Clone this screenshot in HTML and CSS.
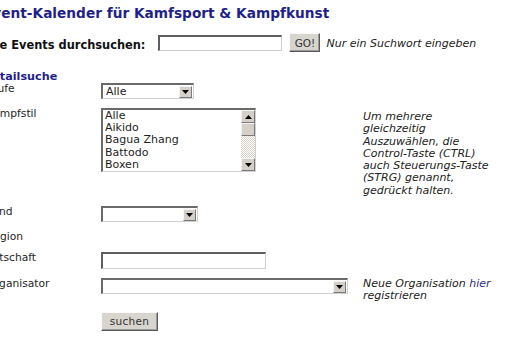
FILE: index.html
```html
<!DOCTYPE html>
<html lang="de">
<head>
<meta charset="utf-8">
<title>Event-Kalender</title>
<link rel="stylesheet" href="styles.css">
</head>
<body>
<div class="page">
  <h1 class="title">Event-Kalender für Kamfsport &amp; Kampfkunst</h1>
  <form class="search">
    <label class="search-label">Alle Events durchsuchen:</label>
    <input class="text search-input" type="text">
    <button class="btn btn-go" type="button">GO!</button>
    <span class="hint">Nur ein Suchwort eingeben</span>
  </form>
  <h2 class="subtitle">Detailsuche</h2>
  <div class="form">
    <div class="label">Stufe</div>
    <div class="control">
      <div class="select select-typ"><span class="select-value">Alle</span><span class="select-arrow"><svg width="7" height="4" viewBox="0 0 7 4"><path d="M0 0H7L3.5 4Z" fill="#000"/></svg></span></div>
    </div>
    <div></div>

    <div class="label">Kampfstil</div>
    <div class="control">
      <div class="listbox">
        <ul class="options">
          <li>Alle</li>
          <li>Aikido</li>
          <li>Bagua Zhang</li>
          <li>Battodo</li>
          <li>Boxen</li>
        </ul>
        <div class="scrollbar">
          <span class="sb-btn"><svg width="7" height="4" viewBox="0 0 7 4"><path d="M0 4H7L3.5 0Z" fill="#000"/></svg></span>
          <span class="sb-thumb"></span>
          <span class="sb-track"></span>
          <span class="sb-btn"><svg width="7" height="4" viewBox="0 0 7 4"><path d="M0 0H7L3.5 4Z" fill="#000"/></svg></span>
        </div>
      </div>
    </div>
    <div class="help help-top">Um mehrere gleichzeitig Auszuwählen, die Control-Taste (CTRL) auch Steuerungs-Taste (STRG) genannt, gedrückt halten.</div>

    <div class="label">Land</div>
    <div class="control">
      <div class="select select-land"><span class="select-value"></span><span class="select-arrow"><svg width="7" height="4" viewBox="0 0 7 4"><path d="M0 0H7L3.5 4Z" fill="#000"/></svg></span></div>
    </div>
    <div></div>

    <div class="label">Region</div>
    <div class="control"></div>
    <div></div>

    <div class="label">Ortschaft</div>
    <div class="control"><input class="text ort-input" type="text"></div>
    <div></div>

    <div class="label">Organisator</div>
    <div class="control">
      <div class="select select-org"><span class="select-value"></span><span class="select-arrow"><svg width="7" height="4" viewBox="0 0 7 4"><path d="M0 0H7L3.5 4Z" fill="#000"/></svg></span></div>
    </div>
    <div class="help">Neue Organisation <a class="link" href="#">hier</a> registrieren</div>

    <div></div>
    <div class="control"><button class="btn btn-submit" type="button">suchen</button></div>
    <div></div>
  </div>
</div>
</body>
</html>
```

FILE: styles.css
```css
* { box-sizing: border-box; }
html, body { margin: 0; padding: 0; background: #fff; }
body {
  font-family: "DejaVu Sans", Verdana, sans-serif;
  color: #1e1e1e;
  overflow: hidden;
}
.page { margin-left: -17px; }

.title {
  font-size: 13.7px;
  font-weight: bold;
  color: #1f1f8c;
  margin: 5px 0 0;
  line-height: 16px;
  white-space: nowrap;
}

/* generic controls */
.text {
  display: block;
  background: #fff;
  border-style: solid;
  border-width: 2px 1px 1px 2px;
  border-color: #5e5e5e #cfcfcf #cfcfcf #5e5e5e;
  padding: 0;
  margin: 0;
}
.btn {
  display: block;
  background: #d8d5ce;
  border: 1px solid;
  border-color: #fafafa #5a5a5a #5a5a5a #fafafa;
  box-shadow: inset -1px -1px 0 #9a9a9a;
  font-family: "DejaVu Sans", Verdana, sans-serif;
  font-size: 10.5px;
  color: #333;
  padding: 0;
  margin: 0;
}

.search {
  display: flex;
  align-items: center;
  height: 19px;
  margin: 12px 0 0;
}
.search-label {
  font-size: 11.4px;
  font-weight: bold;
  color: #111;
  white-space: nowrap;
  margin-top: 4px;
}
.search .search-input { width: 124px; height: 16px; margin-left: 13px; }
.search .btn-go { width: 31px; height: 19px; margin-left: 7px; }
.hint { margin-left: 6px; font-size: 11px; font-style: italic; color: #222; white-space: nowrap; margin-top: 1px; }

.subtitle {
  font-size: 11.2px;
  font-weight: bold;
  color: #1f1f8c;
  margin: 19px 0 0;
  line-height: 12px;
}

.form {
  display: grid;
  grid-template-columns: 118px 262px 134px;
  row-gap: 9px;
  align-items: start;
}
.label {
  padding-left: 3.5px;
  font-size: 10.7px;
  line-height: 12px;
  color: #1e1e1e;
  white-space: nowrap;
}

.ort-input { width: 165px; height: 17px; }

.select {
  display: flex;
  align-items: center;
  height: 16px;
  background: #fff;
  border-style: solid;
  border-width: 2px 1px 1px 2px;
  border-color: #6a6a6a #d0d0d0 #d0d0d0 #6a6a6a;
  padding: 0 1px 0 3px;
  font-size: 11px;
  color: #1e1e1e;
}
.select-typ { width: 93px; }
.select-land { width: 97px; }
.select-org { width: 247px; }
.select-value { flex: 1; line-height: 12px; }
.select-arrow {
  width: 13px;
  height: 12px;
  background: #d4d0c8;
  border: 1px solid;
  border-color: #f4f4f4 #7a7a7a #7a7a7a #f4f4f4;
  display: flex;
  align-items: center;
  justify-content: center;
}
.select-arrow svg, .sb-btn svg { display: block; }

.listbox {
  display: flex;
  width: 155px;
  height: 64px;
  background: #fff;
  border-style: solid;
  border-width: 2px 1px 1px 2px;
  border-color: #6a6a6a #d0d0d0 #d0d0d0 #6a6a6a;
}
.options {
  flex: 1;
  list-style: none;
  margin: 0;
  padding: 0 0 0 2px;
  font-size: 11px;
  line-height: 12.2px;
  color: #1e1e1e;
}
.scrollbar {
  width: 14px;
  display: flex;
  flex-direction: column;
}
.sb-btn, .sb-thumb {
  height: 13px;
  background: #d4d0c8;
  border: 1px solid;
  border-color: #f4f4f4 #7a7a7a #7a7a7a #f4f4f4;
  display: flex;
  align-items: center;
  justify-content: center;
}
.sb-track {
  flex: 1;
  background-color: #fff;
  background-image: repeating-conic-gradient(#d4d0c8 0 25%, #fff 0 50%);
  background-size: 2px 2px;
}

.help {
  font-size: 11px;
  font-style: italic;
  line-height: 12.3px;
  color: #222;
}
.help-top { margin-top: 3px; }
.link { color: #2b2b8f; text-decoration: none; }

.btn-submit { width: 57px; height: 19px; letter-spacing: 0.3px; }
```
